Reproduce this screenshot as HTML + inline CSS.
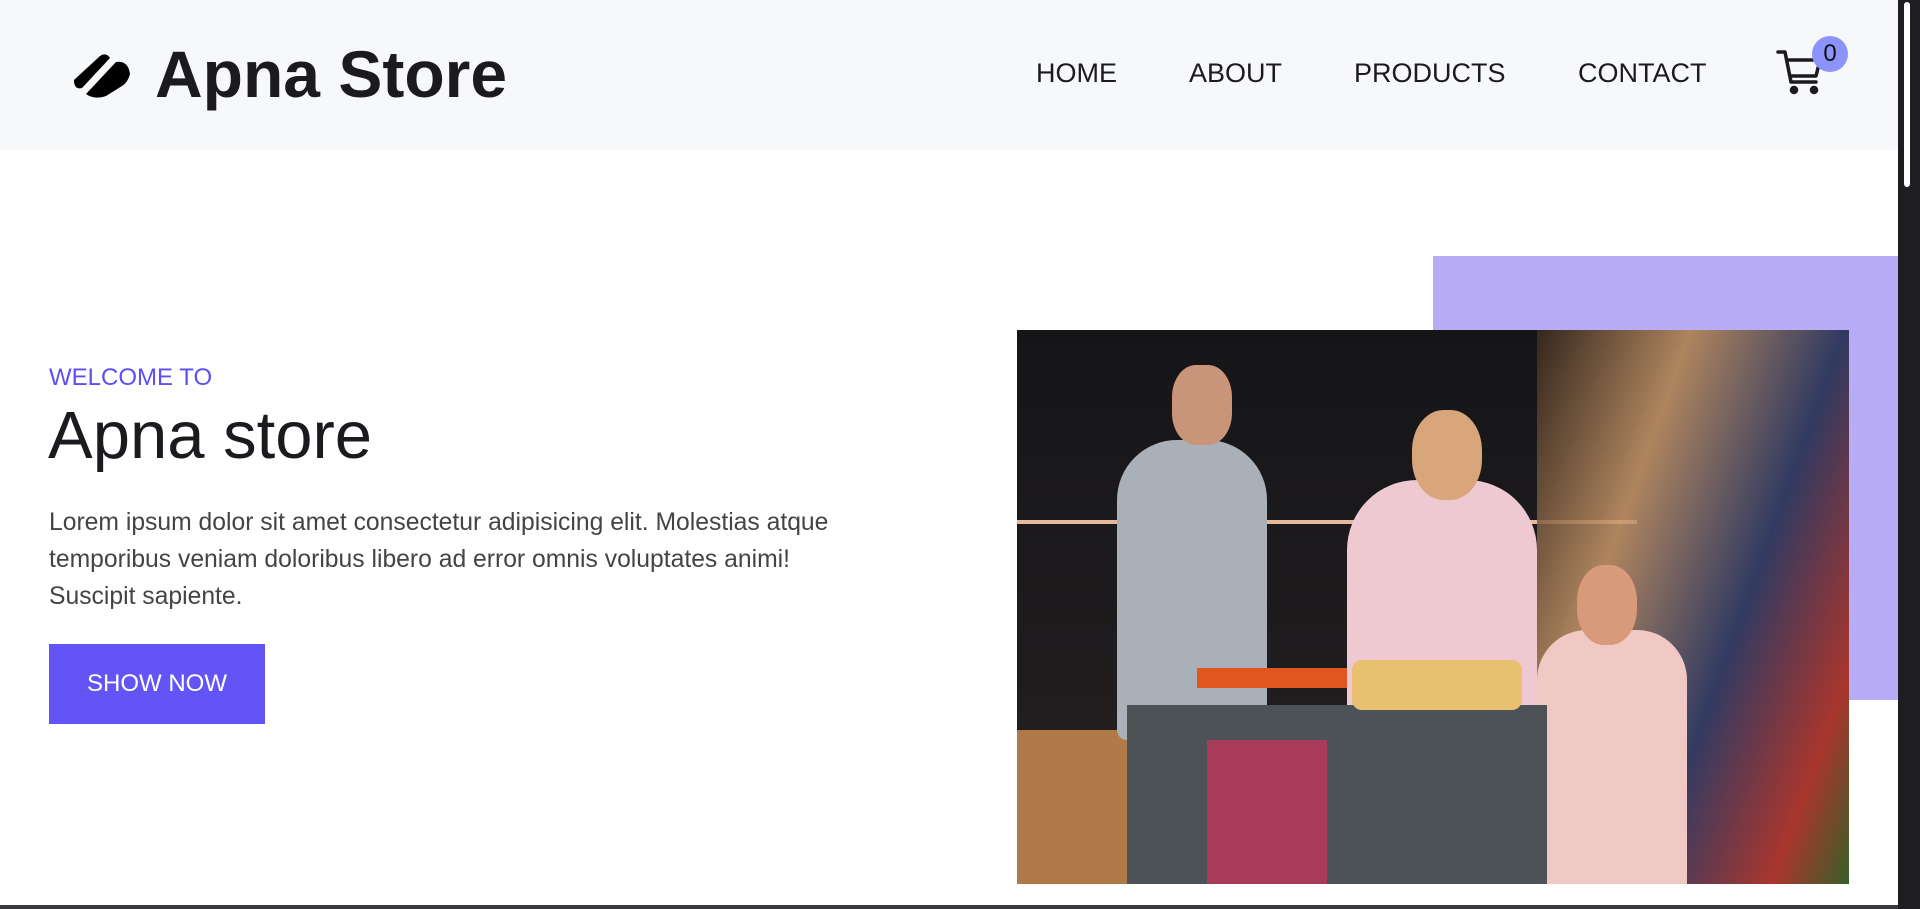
<!DOCTYPE html>
<html><head><meta charset="utf-8"><style>
*{margin:0;padding:0;box-sizing:border-box}
body{width:1920px;height:909px;overflow:hidden;background:#fff;font-family:"Liberation Sans",sans-serif;position:relative}
.hdr{position:absolute;left:0;top:0;width:1898px;height:150px;background:#f7f8fa}
.logo{position:absolute;left:155px;top:36px;font-size:66px;font-weight:bold;color:#1b1b1f;letter-spacing:0}
.nav a{position:absolute;top:58px;font-size:27px;color:#1b1b1f;text-decoration:none}
.sb{position:absolute;left:1898px;top:0;width:22px;height:909px;background:#1e1e22}
.thumb{position:absolute;left:1904px;top:2px;width:6px;height:185px;background:#fff;border-radius:3px}
.bot{position:absolute;left:0;top:905px;width:1898px;height:4px;background:#3a3a3e}
.w{position:absolute;left:49px;top:364px;font-size:24px;color:#5b4ff5}
.h{position:absolute;left:48px;top:397px;font-size:67px;color:#1b1b1f}
.p{position:absolute;left:49px;top:504px;width:805px;font-size:24.7px;line-height:37px;color:#444}
.btn{position:absolute;left:49px;top:644px;width:216px;height:80px;background:#6355f5;color:#fff;font-size:24px;line-height:80px;text-align:center}
.pur{position:absolute;left:1433px;top:256px;width:465px;height:444px;background:#b7acf5}
.ph{position:absolute;left:1017px;top:330px;width:832px;height:554px;overflow:hidden;background:#1a1a1c}
.ph div{position:absolute}
</style></head><body>
<div class="hdr"></div>
<svg style="position:absolute;left:70px;top:50px" width="64" height="50" viewBox="0 0 64 50"><path d="M4 30 L30 6 Q36 2 40 8 L12 38 Q4 40 4 30Z" fill="#000"/><path d="M16 44 L46 12 Q58 10 60 24 Q58 32 52 36 L36 46 Q24 50 16 44Z" fill="#000"/></svg>
<div class="logo">Apna Store</div>
<div class="nav"><a style="left:1036px">HOME</a><a style="left:1189px">ABOUT</a><a style="left:1354px">PRODUCTS</a><a style="left:1578px">CONTACT</a></div>
<svg style="position:absolute;left:1776px;top:48px" width="50" height="50" viewBox="0 0 50 50" fill="none" stroke="#1b1b1f" stroke-width="3.5" stroke-linecap="round" stroke-linejoin="round"><path d="M2 4 H9 L15 34 H40"/><path d="M11 12 H44 L40 28 H14"/><circle cx="18" cy="42" r="2.5" fill="#1b1b1f"/><circle cx="38" cy="42" r="2.5" fill="#1b1b1f"/></svg>
<div style="position:absolute;left:1812px;top:36px;width:36px;height:36px;border-radius:50%;background:#8c94fb;font-size:24px;line-height:36px;text-align:center;color:#111">0</div>
<div class="w">WELCOME TO</div>
<div class="h">Apna store</div>
<div class="p">Lorem ipsum dolor sit amet consectetur adipisicing elit. Molestias atque temporibus veniam doloribus libero ad error omnis voluptates animi! Suscipit sapiente.</div>
<div class="btn">SHOW NOW</div>
<div class="pur"></div>
<div class="ph">
<div style="left:0;top:0;width:832px;height:554px;background:linear-gradient(180deg,#151518 0%,#1f1c1e 60%,#2a2020 100%)"></div>
<div style="left:0;top:190px;width:620px;height:4px;background:#e8b89a"></div>
<div style="left:0;top:400px;width:110px;height:154px;background:#b07a48"></div>
<div style="left:520px;top:0;width:312px;height:554px;background:linear-gradient(110deg,#3a2a1e 0%,#c9986a 30%,#35406e 60%,#c03a30 85%,#3a6a2a 100%);opacity:.85"></div>
<div style="left:100px;top:110px;width:150px;height:300px;background:#a9b0b8;border-radius:60px 60px 10px 10px"></div>
<div style="left:155px;top:35px;width:60px;height:80px;background:#c9957a;border-radius:40%"></div>
<div style="left:330px;top:150px;width:190px;height:260px;background:#eec9d2;border-radius:70px 70px 10px 10px"></div>
<div style="left:395px;top:80px;width:70px;height:90px;background:#d9a57a;border-radius:45%"></div>
<div style="left:520px;top:300px;width:150px;height:254px;background:#f1c9c4;border-radius:50px 50px 0 0"></div>
<div style="left:560px;top:235px;width:60px;height:80px;background:#d89a7a;border-radius:45%"></div>
<div style="left:110px;top:375px;width:420px;height:179px;background:#4c5256"></div>
<div style="left:190px;top:410px;width:120px;height:144px;background:#a83b58"></div>
<div style="left:180px;top:338px;width:150px;height:20px;background:#e0561f"></div>
<div style="left:335px;top:330px;width:170px;height:50px;background:#e8c070;border-radius:10px"></div>
</div>
<div class="bot"></div>
<div class="sb"></div><div class="thumb"></div>
</body></html>
